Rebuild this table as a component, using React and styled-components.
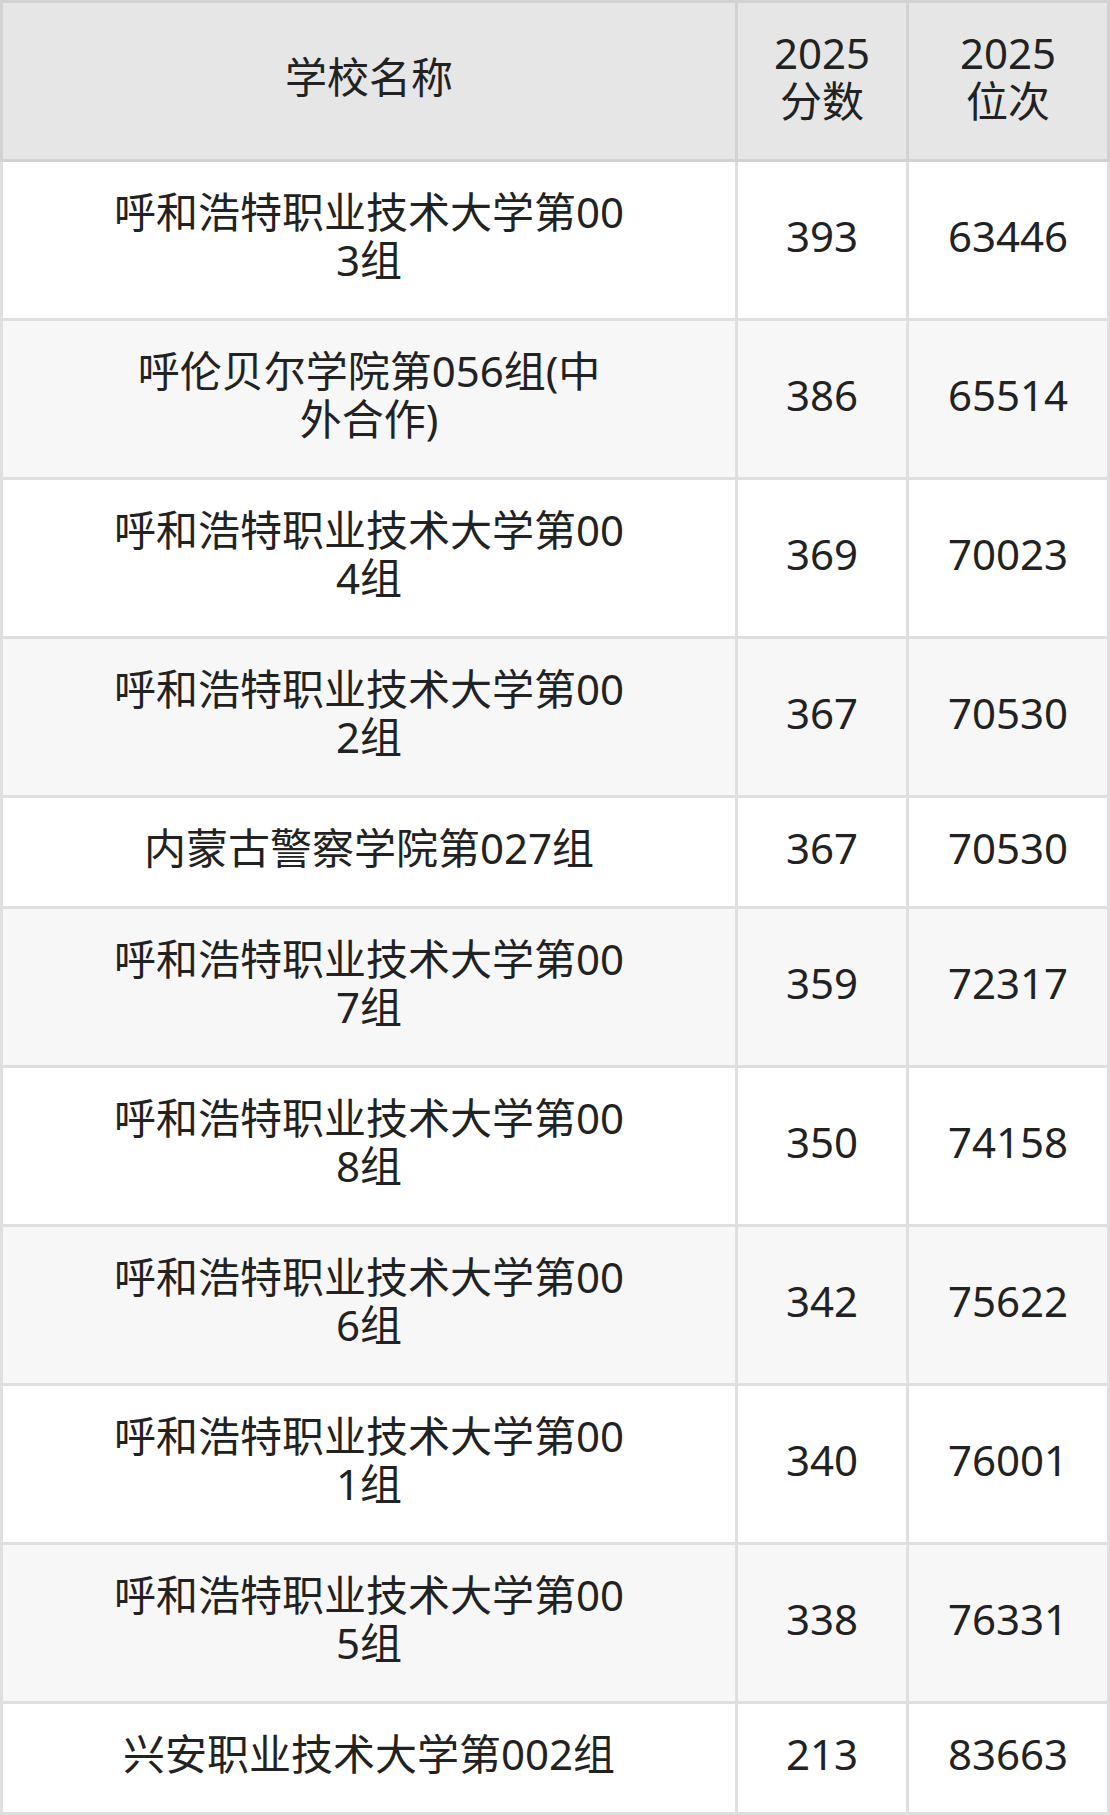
import React from 'react';
import styled, { createGlobalStyle } from 'styled-components';

const GlobalStyle = createGlobalStyle`
  html, body {
    margin: 0;
    padding: 0;
    background: #ffffff;
  }
  body {
    font-family: "Noto Sans", "Noto Sans CJK SC", sans-serif;
    color: #222222;
  }
`;

const Table = styled.div`
  width: 1110px;
  display: flex;
  flex-direction: column;
`;

const Head = styled.div`
  display: grid;
  grid-template-columns: 732px 168px 198px;
  gap: 3px;
  padding: 3px;
  background: #d2d2d2;
`;

const Body = styled.div`
  display: flex;
  flex-direction: column;
  gap: 3px;
  padding: 0 3px 3px;
  background: #dfdfdf;
`;

const Row = styled.div`
  display: grid;
  grid-template-columns: 732px 168px 198px;
  gap: 3px;
`;

const Cell = styled.div`
  display: flex;
  align-items: center;
  justify-content: center;
  text-align: center;
  padding: 26px 0 34px;
  font-size: 42px;
  line-height: 48px;
  white-space: pre-line;
  background: ${(p) => (p.$head ? '#e6e6e6' : p.$odd ? '#f7f7f7' : '#ffffff')};
`;

const rows = [
  ['呼和浩特职业技术大学第00\n3组', '393', '63446'],
  ['呼伦贝尔学院第056组(中\n外合作)', '386', '65514'],
  ['呼和浩特职业技术大学第00\n4组', '369', '70023'],
  ['呼和浩特职业技术大学第00\n2组', '367', '70530'],
  ['内蒙古警察学院第027组', '367', '70530'],
  ['呼和浩特职业技术大学第00\n7组', '359', '72317'],
  ['呼和浩特职业技术大学第00\n8组', '350', '74158'],
  ['呼和浩特职业技术大学第00\n6组', '342', '75622'],
  ['呼和浩特职业技术大学第00\n1组', '340', '76001'],
  ['呼和浩特职业技术大学第00\n5组', '338', '76331'],
  ['兴安职业技术大学第002组', '213', '83663'],
];

const App = () => (
  <>
    <GlobalStyle />
    <Table>
      <Head>
        <Cell $head>学校名称</Cell>
        <Cell $head>{'2025\n分数'}</Cell>
        <Cell $head>{'2025\n位次'}</Cell>
      </Head>
      <Body>
        {rows.map((r, i) => (
          <Row key={i}>
            {r.map((v, j) => (
              <Cell key={j} $odd={i % 2 === 1}>{v}</Cell>
            ))}
          </Row>
        ))}
      </Body>
    </Table>
  </>
);

export default App;
